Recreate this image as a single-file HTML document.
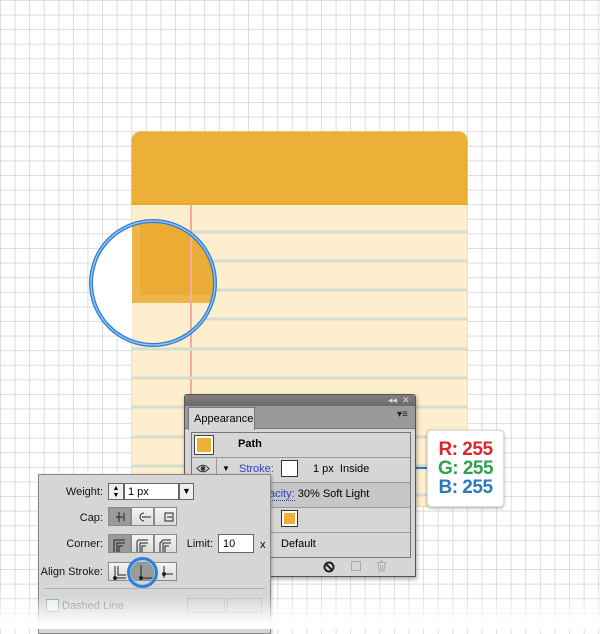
<!DOCTYPE html>
<html><head><meta charset="utf-8"><style>
*{margin:0;padding:0;box-sizing:border-box}
body{width:600px;height:629px;overflow:hidden;position:relative;font-family:"Liberation Sans",Arial,sans-serif;font-size:11px;color:#000;
background-color:#fff;
background-image:linear-gradient(to right,#dcdcdc 1px,transparent 1px),linear-gradient(to bottom,#dcdcdc 1px,transparent 1px);
background-size:14.6px 14.6px;background-position:14.5px 14.5px}
.a{position:absolute;white-space:nowrap}
.btn{position:absolute;width:23px;height:19px;border:1px solid #8a8a8a;background:linear-gradient(#f4f4f4,#dcdcdc)}
.btn.on{background:#9a9a9a}
.lbl{position:absolute;text-align:right;font-size:11px;color:#111;white-space:nowrap}
</style></head><body>
<!-- notepad -->
<div class="a" style="left:131px;top:131px;width:337px;height:376px;background:#fdeecd;border-radius:10px 10px 4px 4px;border:1px solid #f3dfa8"></div>
<div class="a" style="left:131px;top:131px;width:337px;height:74px;background:#ecaf37;border-radius:10px 10px 0 0;border:1px solid #f1c45f;border-bottom:2px solid #e8a92f"></div>
<div class="a" style="left:190px;top:205px;width:2px;height:300px;background:#f6aaa0"></div>
<svg class="a" style="left:132px;top:0" width="335" height="629">
<g stroke="#d4ddcf" stroke-width="3">
<line x1="60" x2="335" y1="232" y2="232"/><line x1="60" x2="335" y1="261" y2="261"/><line x1="60" x2="335" y1="290" y2="290"/>
<line x1="0" x2="335" y1="319" y2="319"/><line x1="0" x2="335" y1="349" y2="349"/><line x1="0" x2="335" y1="378" y2="378"/>
<line x1="0" x2="335" y1="407" y2="407"/><line x1="0" x2="335" y1="437" y2="437"/><line x1="0" x2="335" y1="466" y2="466"/>
<line x1="0" x2="335" y1="495" y2="495"/>
</g></svg>
<!-- magnifier -->
<svg class="a" style="left:80px;top:210px" width="150" height="150">
<defs><clipPath id="c"><circle cx="73" cy="73" r="61"/></clipPath></defs>
<g clip-path="url(#c)">
<rect width="150" height="150" fill="#fff"/>
<rect x="52" y="0" width="100" height="150" fill="#fdeecd"/>
<rect x="52" y="0" width="100" height="93" fill="#eeb54a"/>
<rect x="60" y="0" width="100" height="85" fill="#eaac35"/>
<rect x="110" y="0" width="2" height="150" fill="#f6aaa0"/>
</g>
<circle cx="73" cy="73" r="62" fill="none" stroke="#2f7fd6" stroke-width="4"/>
<circle cx="73" cy="73" r="62" fill="none" stroke="#9cc8f4" stroke-width="1.3"/>
</svg>
<!-- connector -->
<div class="a" style="left:397px;top:467px;width:32px;height:2px;background:#2a78c8"></div>
<div class="a" style="left:393px;top:464px;width:8px;height:8px;border-radius:50%;background:#cfe3fb;border:1px solid #2a78c8"></div>
<!-- callout -->
<div class="a" style="left:427px;top:430px;width:77px;height:77px;background:#fff;border:1px solid #ddd;border-radius:4px;box-shadow:0 1px 3px rgba(0,0,0,.35);font-family:'Liberation Sans',sans-serif;font-weight:bold;font-size:19px;line-height:19px;text-align:center;padding-top:9px;letter-spacing:-0.5px">
<div style="color:#d8262e">R: 255</div><div style="color:#2ea14c">G: 255</div><div style="color:#2b79ba">B: 255</div></div>
<!-- appearance panel -->
<div class="a" style="left:184px;top:394px;width:232px;height:183px;background:#d6d6d6;border:1px solid #555;border-radius:3px 3px 0 0;box-shadow:1px 2px 4px rgba(0,0,0,.35);overflow:hidden">
<div class="a" style="left:0;top:0;width:232px;height:11px;background:linear-gradient(#808080,#6a6a6a)"></div>
<div class="a" style="left:203px;top:0;color:#ddd;font-size:9px;line-height:11px">◂◂ &nbsp;✕</div>
<div class="a" style="left:0;top:11px;width:232px;height:23px;background:#9a9a9a;border-bottom:1px solid #777"></div>
<div class="a" style="left:3px;top:12px;width:67px;height:23px;background:#d6d6d6;border:1px solid #777;border-bottom:none;padding:5px 0 0 5px;font-size:11px">Appearance</div>
<div class="a" style="left:212px;top:14px;font-size:10px;color:#222">▾≡</div>
<div class="a" style="left:6px;top:37px;width:220px;height:126px;border:1px solid #777;background:#d6d6d6"></div>
<div class="a" style="left:7px;top:87px;width:218px;height:25px;background:#c6c6c6"></div>
<div class="a" style="left:7px;top:62px;width:218px;border-top:1px solid #9a9a9a"></div>
<div class="a" style="left:7px;top:87px;width:218px;border-top:1px solid #9a9a9a"></div>
<div class="a" style="left:7px;top:112px;width:218px;border-top:1px solid #9a9a9a"></div>
<div class="a" style="left:7px;top:137px;width:218px;border-top:1px solid #9a9a9a"></div>
<div class="a" style="left:31px;top:62px;height:100px;border-left:1px solid #9a9a9a"></div>
<div class="a" style="left:9px;top:40px;width:20px;height:20px;border:1px solid #444;background:#fff;padding:2px"><div style="width:14px;height:14px;background:#ecaf37"></div></div>
<div class="a" style="left:53px;top:43px;font-weight:bold">Path</div>
<svg class="a" style="left:11px;top:69px" width="14" height="9"><path d="M1 4.5Q7 -2 13 4.5Q7 11 1 4.5Z" fill="none" stroke="#333"/><circle cx="7" cy="4.5" r="2.3" fill="#333"/></svg>
<div class="a" style="left:37px;top:69px;font-size:8px">▼</div>
<div class="a" style="left:54px;top:68px;color:#2b3fd0">Stroke:</div>
<div class="a" style="left:96px;top:65px;width:17px;height:17px;border:1px solid #333;background:#fff;outline:1px solid #fff;outline-offset:-3px"></div>
<div class="a" style="left:128px;top:68px">1 px &nbsp;Inside</div>
<div class="a" style="left:84px;top:93px"><span style="color:#2b3fd0;border-bottom:1px dotted #2b3fd0">acity:</span> 30% Soft Light</div>
<div class="a" style="left:96px;top:115px;width:17px;height:17px;border:1px solid #333;background:#fff;padding:2px"><div style="width:11px;height:11px;background:#ecaf37"></div></div>
<div class="a" style="left:96px;top:143px">Default</div>
<svg class="a" style="left:138px;top:166px" width="12" height="12"><circle cx="6" cy="6" r="4.5" fill="none" stroke="#222" stroke-width="2"/><path d="M3 3l6 6" stroke="#222" stroke-width="2"/></svg>
<div class="a" style="left:166px;top:166px;width:10px;height:10px;border:1px solid #aaa"></div>
<svg class="a" style="left:191px;top:165px" width="11" height="12" fill="none" stroke="#aaa"><path d="M1 2.5h9M4 1h3M2 3l1 8h5l1-8M4.5 5v5M6.5 5v5"/></svg>
</div>
<!-- stroke panel -->
<div class="a" style="left:38px;top:474px;width:233px;height:160px;background:#d6d6d6;border:1px solid #888;box-shadow:1px 1px 3px rgba(0,0,0,.25)">
<div class="lbl" style="left:0;top:11px;width:64px">Weight:</div>
<div class="a" style="left:69px;top:8px;width:16px;height:17px;border:1px solid #666;background:#eee;font-size:7px;line-height:7px;text-align:center;padding-top:1px">▲<br>▼</div>
<div class="a" style="left:85px;top:8px;width:55px;height:17px;border:1px solid #666;background:#fff;padding:2px 3px">1 px</div>
<div class="a" style="left:140px;top:8px;width:15px;height:17px;border:1px solid #666;background:#eee;font-size:9px;text-align:center;line-height:15px">▼</div>
<div class="lbl" style="left:0;top:37px;width:64px">Cap:</div>
<div class="btn on" style="left:69px;top:32px"></div><div class="btn" style="left:92px;top:32px"></div><div class="btn" style="left:115px;top:32px"></div>
<div class="lbl" style="left:0;top:63px;width:64px">Corner:</div>
<div class="btn on" style="left:69px;top:59px"></div><div class="btn" style="left:92px;top:59px"></div><div class="btn" style="left:115px;top:59px"></div>
<svg class="a" style="left:69px;top:32px" width="70" height="50" stroke="#222" fill="none" stroke-width="1">
<path d="M11 5v10M8 10h7M16 6v8"/><path d="M36 6a4 4 0 0 0 0 8M34 10h9"/><path d="M57 6v8h8v-8z M59 10h5"/>
<path d="M6 45v-12h11M9 45v-9h8M11 45v-6h4" />
<path d="M29 45v-10a2 2 0 0 1 2-2h9M32 45v-9h8M34 45v-6h4"/>
<path d="M52 45v-9l3-3h8M55 45v-9h8M57 45v-6h4"/>
</svg>
<div class="lbl" style="left:140px;top:63px;width:34px">Limit:</div>
<div class="a" style="left:179px;top:59px;width:36px;height:19px;border:1px solid #666;background:#fff;padding:3px 4px">10</div>
<div class="a" style="left:221px;top:64px">x</div>
<div class="lbl" style="left:0;top:91px;width:64px">Align Stroke:</div>
<div class="btn" style="left:69px;top:87px"></div><div class="btn on" style="left:92px;top:87px"></div><div class="btn" style="left:115px;top:87px"></div>
<svg class="a" style="left:69px;top:87px" width="70" height="20" stroke="#222" fill="none">
<path d="M7 4v12h11M10 4v9h8"/><circle cx="7" cy="16" r="1.5" fill="#222"/>
<path d="M33 3v13h12"/><circle cx="33" cy="16" r="1.5" fill="#222"/>
<path d="M56 4v12M56 12h9"/><circle cx="56" cy="12" r="1.5" fill="#222"/>
</svg>
<div class="a" style="left:88px;top:82px;width:31px;height:31px;border-radius:50%;border:3px solid #2f80d8;box-shadow:0 0 0 1px #9cc8f4 inset"></div>
<div class="a" style="left:6px;top:113px;width:220px;border-top:1px solid #b0b0b0"></div>
<div class="a" style="left:7px;top:124px;width:13px;height:13px;border:1px solid #8aa;background:#eee"></div>
<div class="a" style="left:23px;top:125px;color:#888">Dashed Line</div>
<div class="a" style="left:148px;top:123px;width:38px;height:15px;border:1px solid #bbb"></div>
<div class="a" style="left:188px;top:123px;width:35px;height:15px;border:1px solid #bbb"></div>
</div>
<div class="a" style="left:0;top:596px;width:600px;height:33px;background:linear-gradient(rgba(255,255,255,0),#fff 85%)"></div>
</body></html>
